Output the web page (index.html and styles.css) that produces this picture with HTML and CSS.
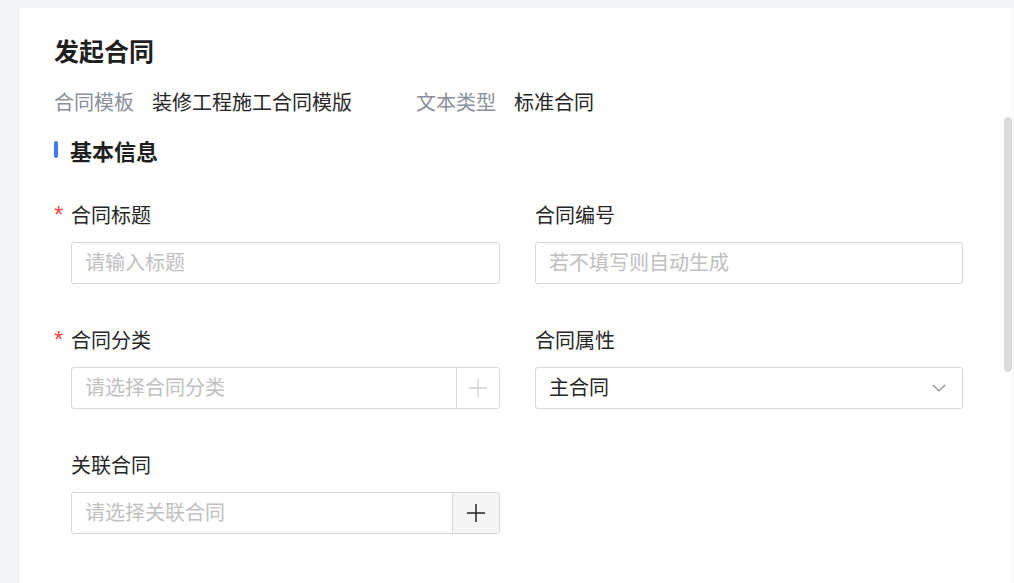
FILE: index.html
```html
<!DOCTYPE html>
<html lang="zh-CN">
<head>
<meta charset="utf-8">
<title>发起合同</title>
<link rel="stylesheet" href="styles.css">
</head>
<body>
<div class="card">
  <h1 class="title">发起合同</h1>
  <div class="meta">
    <span class="meta-key">合同模板</span><span class="meta-val">装修工程施工合同模版</span>
    <span class="meta-key meta-key-2">文本类型</span><span class="meta-val">标准合同</span>
  </div>
  <h2 class="section"><span class="section-bar"></span>基本信息</h2>
  <div class="form">
    <div class="field">
      <div class="label"><span class="req">*</span>合同标题</div>
      <div class="input"><span class="ph">请输入标题</span></div>
    </div>
    <div class="field">
      <div class="label">合同编号</div>
      <div class="input"><span class="ph">若不填写则自动生成</span></div>
    </div>
    <div class="field">
      <div class="label"><span class="req">*</span>合同分类</div>
      <div class="input group">
        <span class="ph grow">请选择合同分类</span>
        <span class="addon addon-light">
          <svg width="20" height="20" viewBox="0 0 20 20"><path d="M10 1v18M1 10h18" stroke="#cfcfcf" stroke-width="1.3" fill="none"/></svg>
        </span>
      </div>
    </div>
    <div class="field">
      <div class="label">合同属性</div>
      <div class="input select">
        <span class="val grow">主合同</span>
        <svg class="chev" width="14" height="8" viewBox="0 0 14 8"><path d="M1 1l6 6 6-6" stroke="#8c8c8c" stroke-width="1.2" fill="none"/></svg>
      </div>
    </div>
    <div class="field">
      <div class="label">关联合同</div>
      <div class="input group">
        <span class="ph grow">请选择关联合同</span>
        <span class="addon addon-dark">
          <svg width="20" height="20" viewBox="0 0 20 20"><path d="M10 1v18M1 10h18" stroke="#262626" stroke-width="1.5" fill="none"/></svg>
        </span>
      </div>
    </div>
  </div>
  <div class="scrollbar"></div>
</div>
</body>
</html>
```
FILE: styles.css
```css
* { box-sizing: border-box; }
html, body { margin: 0; padding: 0; }
body {
  background: #f4f5f7;
  font-family: "Noto Sans CJK SC", "Noto Sans", sans-serif;
  color: #262626;
  height: 583px;
  overflow: hidden;
}
.card {
  position: relative;
  margin: 8px 0 0 20px;
  width: 993px;
  height: 600px;
  background: #fff;
  padding: 25px 0 0 34px;
}
.title {
  margin: 0;
  font-size: 25px;
  line-height: 34px;
  font-weight: 700;
  color: #1f1f1f;
}
.meta {
  margin-top: 21px;
  display: flex;
  align-items: center;
  font-size: 20px;
  line-height: 28px;
}
.meta-key { color: #8a8f99; margin-right: 18px; }
.meta-key-2 { margin-left: 64px; }
.meta-val { color: #262626; }
.section {
  margin: 19px 0 0 0;
  display: flex;
  align-items: center;
  font-size: 22px;
  line-height: 30px;
  font-weight: 700;
  color: #1f1f1f;
}
.section-bar {
  width: 4px;
  height: 17px;
  background: #3a7cf6;
  border-radius: 2px;
  margin-right: 12px;
  margin-top: -2px;
}
.form {
  margin-top: 36px;
  padding-left: 17px;
  display: grid;
  grid-template-columns: 429px 428px;
  column-gap: 35px;
  row-gap: 42px;
}
.label {
  font-size: 20px;
  line-height: 28px;
  color: #262626;
  margin-bottom: 13px;
}
.req {
  display: inline-block;
  width: 17px;
  margin-left: -17px;
  color: #f5484a;
  font-size: 24px;
  line-height: 28px;
  vertical-align: top;
  font-family: "Liberation Sans", sans-serif;
}
.input {
  height: 42px;
  border: 1px solid #d9d9d9;
  border-radius: 3px;
  display: flex;
  align-items: center;
  padding-left: 13px;
  padding-bottom: 3px;
  font-size: 20px;
  background: #fff;
}
.ph { color: #c0c0c0; }
.val { color: #262626; }
.grow { flex: 1; }
.group { padding-right: 0; padding-bottom: 0; overflow: hidden; }
.group .ph { padding-bottom: 3px; }
.select { padding-right: 16px; }
.select .chev { margin-top: 3px; }
.addon {
  align-self: stretch;
  display: flex;
  align-items: center;
  justify-content: center;
  border-left: 1px solid #d9d9d9;
}
.addon-light { width: 43px; background: #fff; }
.addon-dark { width: 47px; background: #f5f5f5; }
.chev { display: block; }
.scrollbar {
  position: absolute;
  right: 1px;
  top: 109px;
  width: 8px;
  height: 255px;
  border-radius: 4px;
  background: #dcdcdc;
}
```
